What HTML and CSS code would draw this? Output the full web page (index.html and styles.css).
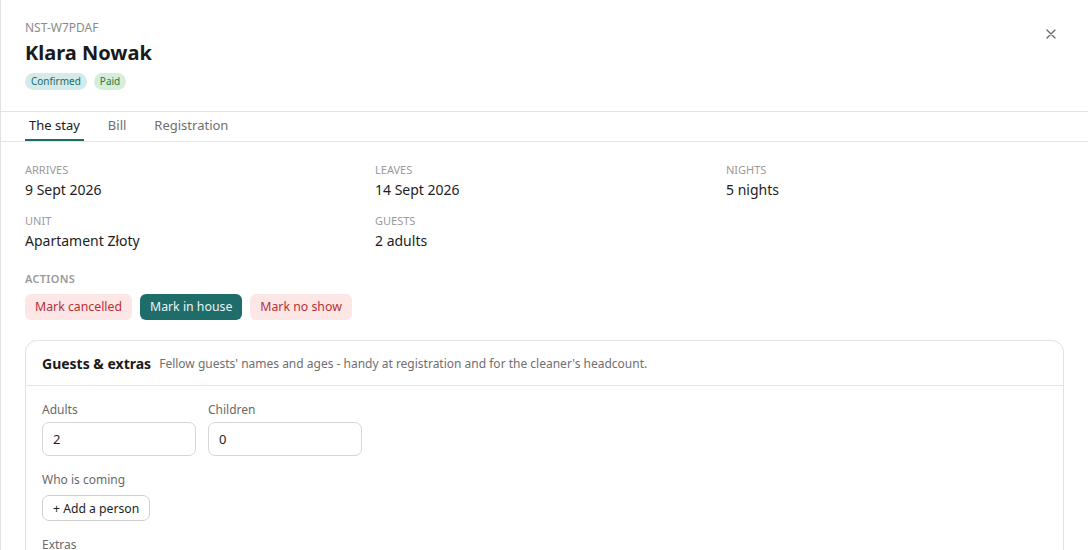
FILE: index.html
```html
<!DOCTYPE html>
<html>
<head>
<meta charset="utf-8">
<link rel="stylesheet" href="styles.css">
</head>
<body>
<div class="panel">
  <header class="head">
    <div class="head-main">
      <div class="ref">NST-W7PDAF</div>
      <h1 class="name">Klara Nowak</h1>
      <div class="badges">
        <span class="badge badge-teal">Confirmed</span>
        <span class="badge badge-green">Paid</span>
      </div>
    </div>
    <button class="close" aria-label="Close">
      <svg width="10" height="10" viewBox="0 0 10 10"><path d="M1 1L9 9M9 1L1 9" stroke="#666" stroke-width="1.3" stroke-linecap="round"/></svg>
    </button>
  </header>
  <nav class="tabs">
    <span class="tab active">The stay</span>
    <span class="tab">Bill</span>
    <span class="tab">Registration</span>
  </nav>
  <main class="content">
    <div class="facts">
      <div class="fact"><div class="lbl">Arrives</div><div class="val">9 Sept 2026</div></div>
      <div class="fact"><div class="lbl">Leaves</div><div class="val">14 Sept 2026</div></div>
      <div class="fact"><div class="lbl">Nights</div><div class="val">5 nights</div></div>
      <div class="fact"><div class="lbl">Unit</div><div class="val">Apartament Złoty</div></div>
      <div class="fact"><div class="lbl">Guests</div><div class="val">2 adults</div></div>
    </div>
    <div class="actions">
      <div class="section-lbl">Actions</div>
      <div class="btn-row">
        <button class="btn btn-danger">Mark cancelled</button>
        <button class="btn btn-primary">Mark in house</button>
        <button class="btn btn-danger">Mark no show</button>
      </div>
    </div>
    <section class="card">
      <div class="card-head">
        <span class="card-title">Guests &amp; extras</span>
        <span class="card-desc">Fellow guests' names and ages - handy at registration and for the cleaner's headcount.</span>
      </div>
      <div class="card-body">
        <div class="field-row">
          <label class="field"><span class="field-lbl">Adults</span><input class="input" value="2"></label>
          <label class="field"><span class="field-lbl">Children</span><input class="input" value="0"></label>
        </div>
        <div class="group">
          <div class="field-lbl">Who is coming</div>
          <button class="btn-outline">+ Add a person</button>
        </div>
        <div class="group">
          <div class="field-lbl">Extras</div>
        </div>
      </div>
    </section>
  </main>
</div>
</body>
</html>
```
FILE: styles.css
```css
* { box-sizing: border-box; }
html, body { margin: 0; padding: 0; }
body {
  font-family: "Noto Sans", "Open Sans", sans-serif;
  color: #1d1d1d;
  background: #fff;
  width: 1088px;
  height: 550px;
  overflow: hidden;
}
.panel {
  border-left: 1px solid #e2e2e2;
  height: 550px;
  overflow: hidden;
}
.head {
  display: flex;
  justify-content: space-between;
  padding: 20px 29px 0 24px;
  height: 112px;
  border-bottom: 1px solid #e4e4e4;
}
.ref {
  font-size: 12px;
  color: #8a8a8a;
  line-height: 16px;
}
.name {
  margin: 3px 0 0;
  font-size: 20px;
  font-weight: 700;
  line-height: 28px;
  color: #1a1a1a;
}
.badges {
  display: flex;
  gap: 7px;
  margin-top: 6px;
}
.badge {
  font-size: 10px;
  line-height: 17px;
  padding: 0 6px;
  border-radius: 9px;
}
.badge-teal { background: #d3ebea; color: #236a66; }
.badge-green { background: #d4eedb; color: #2a7a43; }
.close {
  border: 0;
  background: none;
  padding: 0;
  width: 16px;
  height: 16px;
  margin-top: 6px;
  display: flex;
  align-items: center;
  justify-content: center;
}
.tabs {
  display: flex;
  padding: 0 0 0 24px;
  border-bottom: 1px solid #e4e4e4;
  height: 30px;
}
.tab {
  font-size: 13px;
  line-height: 27px;
  padding: 0 4px;
  margin-right: 20px;
  color: #6f6f6f;
  border-bottom: 2px solid transparent;
}
.tab.active {
  color: #1a1a1a;
  border-bottom-color: #1f6b68;
}
.content {
  padding: 21px 24px 0 24px;
}
.facts {
  display: grid;
  grid-template-columns: 350px 351px 1fr;
  row-gap: 14px;
}
.lbl {
  font-size: 11px;
  text-transform: uppercase;
  color: #9a9a9a;
  line-height: 14px;
}
.val {
  font-size: 14px;
  line-height: 20px;
  margin-top: 3px;
  color: #1d1d1d;
}
.actions { margin-top: 21px; }
.section-lbl {
  font-size: 11px;
  font-weight: 600;
  text-transform: uppercase;
  color: #9a9a9a;
  letter-spacing: 0.3px;
  line-height: 14px;
}
.btn-row {
  display: flex;
  gap: 8px;
  margin-top: 8px;
}
.btn {
  font-family: inherit;
  font-size: 12.3px;
  border: 0;
  border-radius: 6px;
  height: 26px;
  padding: 0 10px;
  line-height: 26px;
}
.btn-danger { background: #fde6e6; color: #b5303a; }
.btn-primary { background: #1f6d6a; color: #eaf4f3; }
.card {
  margin-top: 20px;
  width: 1039px;
  border: 1px solid #e2e2e2;
  border-radius: 12px;
  height: 260px;
}
.card-head {
  height: 45px;
  border-bottom: 1px solid #e4e4e4;
  padding: 0 16px;
  display: flex;
  align-items: center;
  gap: 8px;
}
.card-title {
  font-size: 14px;
  font-weight: 700;
  color: #1a1a1a;
}
.card-desc {
  font-size: 12px;
  color: #6f6f6f;
}
.card-body {
  padding: 16px 16px;
}
.field-row {
  display: flex;
  gap: 12px;
}
.field {
  display: flex;
  flex-direction: column;
}
.field-lbl {
  font-size: 12px;
  color: #6a6a6a;
  line-height: 16px;
}
.input {
  margin-top: 4px;
  width: 154px;
  height: 34px;
  border: 1px solid #d6d6d6;
  border-radius: 7px;
  padding: 0 10px;
  font-family: inherit;
  font-size: 13px;
  color: #1d1d1d;
  outline: none;
}
.group { margin-top: 16px; }
.btn-outline {
  margin-top: 7px;
  height: 26px;
  padding: 0 10px;
  border: 1px solid #d0d0d0;
  border-radius: 7px;
  background: #fff;
  font-family: inherit;
  font-size: 12.2px;
  color: #1d1d1d;
}
```
